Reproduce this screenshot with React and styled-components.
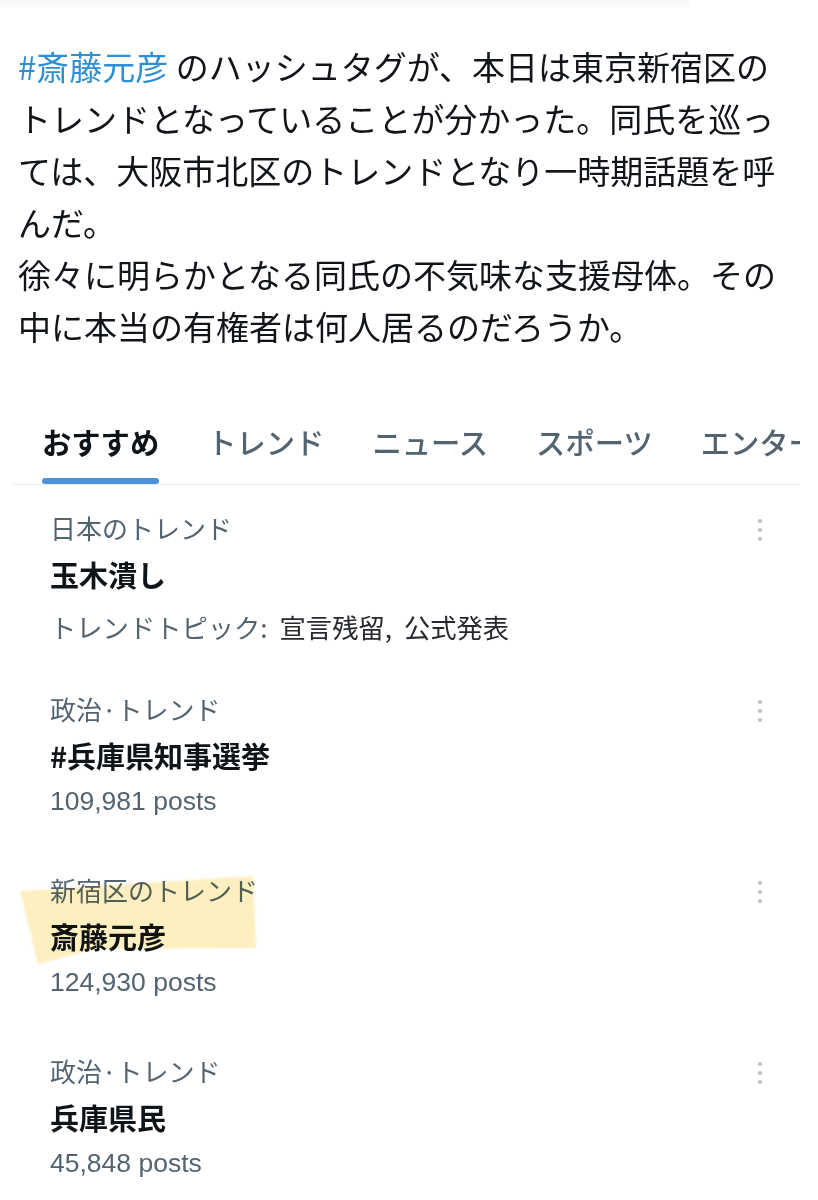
import React from "react";
import styled, { createGlobalStyle } from "styled-components";

const Global = createGlobalStyle`
  html, body { margin: 0; padding: 0; background: #ffffff; }
  body { font-family: "Noto Sans CJK JP", "Noto Sans", sans-serif; color: #0f1419; }
`;

const Page = styled.div`
  width: 818px;
  height: 1200px;
  overflow: hidden;
  position: relative;
  background: #fff;
`;

const TopShade = styled.div`
  height: 8px;
  margin-right: 128px;
  background: linear-gradient(#f7f7f8, #fcfcfd);
`;

const Post = styled.p`
  margin: 0;
  padding: 32px 0 0 18px;
  font-size: 33px;
  line-height: 52px;
  color: #111418;
  white-space: nowrap;
`;

const Hashtag = styled.span`
  color: #2f8fd3;
`;

const Panel = styled.div`
  margin: 49px 18px 0 12px;
  position: relative;
`;

const TabBar = styled.div`
  display: flex;
  padding-left: 6px;
  border-bottom: 1px solid #eceff1;
  overflow: hidden;
  white-space: nowrap;
`;

const Tab = styled.div`
  flex: none;
  padding: 20px 24px 0;
  display: flex;
  flex-direction: column;
  align-items: stretch;
  font-size: 29.3px;
  line-height: 40px;
  font-weight: ${(p) => (p.$active ? 700 : 500)};
  color: ${(p) => (p.$active ? "#0f1419" : "#536471")};
`;

const Underline = styled.div`
  height: 6px;
  margin-top: 17px;
  border-radius: 3px;
  background: ${(p) => (p.$on ? "#4a93db" : "transparent")};
`;

const List = styled.div`
  display: flex;
  flex-direction: column;
`;

const Item = styled.div`
  position: relative;
  display: grid;
  grid-template-columns: 1fr 40px;
  padding: 20px 20px 23px 38px;
`;

const Lines = styled.div`
  display: flex;
  flex-direction: column;
  position: relative;
  z-index: 0;
`;

const Category = styled.div`
  font-size: 26px;
  line-height: 46px;
  color: #536471;
`;

const Title = styled.div`
  font-size: 29px;
  line-height: 46px;
  font-weight: 700;
  color: #0f1419;
`;

const Meta = styled.div`
  font-family: ${(p) =>
    p.$latin
      ? '"Liberation Sans", "Noto Sans CJK JP", sans-serif'
      : '"Noto Sans CJK JP", sans-serif'};
  font-size: ${(p) => (p.$latin ? "26.5px" : "26.3px")};
  word-spacing: ${(p) => (p.$latin ? "0" : "6px")};
  line-height: 46px;
  margin-top: ${(p) => (p.$shift ? "7px" : "0")};
  margin-bottom: ${(p) => (p.$shift ? "-7px" : "0")};
  color: #536471;
`;

const Strong = styled.span`
  color: #26292d;
`;

const Dots = styled.div`
  display: flex;
  flex-direction: column;
  align-items: center;
  gap: 5px;
  padding-top: 14px;
  & > span {
    width: 4px;
    height: 4px;
    border-radius: 50%;
    background: #bcc1c6;
  }
`;

const Mark = styled.svg`
  position: absolute;
  left: 0;
  top: 0;
  width: 260px;
  height: 130px;
  mix-blend-mode: multiply;
  filter: blur(0.8px);
  pointer-events: none;
  z-index: 1;
`;

const trends = [
  { cat: "日本のトレンド", title: "玉木潰し", topic: true },
  { cat: "政治·トレンド", title: "#兵庫県知事選挙", posts: "109,981 posts" },
  { cat: "新宿区のトレンド", title: "斎藤元彦", posts: "124,930 posts", marked: true },
  { cat: "政治·トレンド", title: "兵庫県民", posts: "45,848 posts" },
];

const tabs = ["おすすめ", "トレンド", "ニュース", "スポーツ", "エンターテインメント"];

export default function App() {
  return (
    <Page>
      <Global />
      <TopShade />
      <Post>
        <Hashtag>#斎藤元彦</Hashtag> のハッシュタグが、本日は東京新宿区の
        <br />
        トレンドとなっていることが分かった。同氏を巡っ
        <br />
        ては、大阪市北区のトレンドとなり一時期話題を呼
        <br />
        んだ。
        <br />
        徐々に明らかとなる同氏の不気味な支援母体。その
        <br />
        中に本当の有権者は何人居るのだろうか。
      </Post>
      <Panel>
        <TabBar>
          {tabs.map((t, i) => (
            <Tab key={t} $active={i === 0}>
              <span>{t}</span>
              <Underline $on={i === 0} />
            </Tab>
          ))}
        </TabBar>
        <List>
          {trends.map((t) => (
            <Item key={t.title}>
              <Lines>
                <Category>{t.cat}</Category>
                <Title>{t.title}</Title>
                {t.topic ? (
                  <Meta $shift>
                    トレンドトピック: <Strong>宣言残留, 公式発表</Strong>
                  </Meta>
                ) : (
                  <Meta $latin>{t.posts}</Meta>
                )}
              </Lines>
              <Dots>
                <span />
                <span />
                <span />
              </Dots>
              {t.marked && (
                <Mark viewBox="0 0 260 130">
                  <polygon points="8,44 241,29 244,101 83,102 26,117" fill="#fdefc0" />
                </Mark>
              )}
            </Item>
          ))}
        </List>
      </Panel>
    </Page>
  );
}
